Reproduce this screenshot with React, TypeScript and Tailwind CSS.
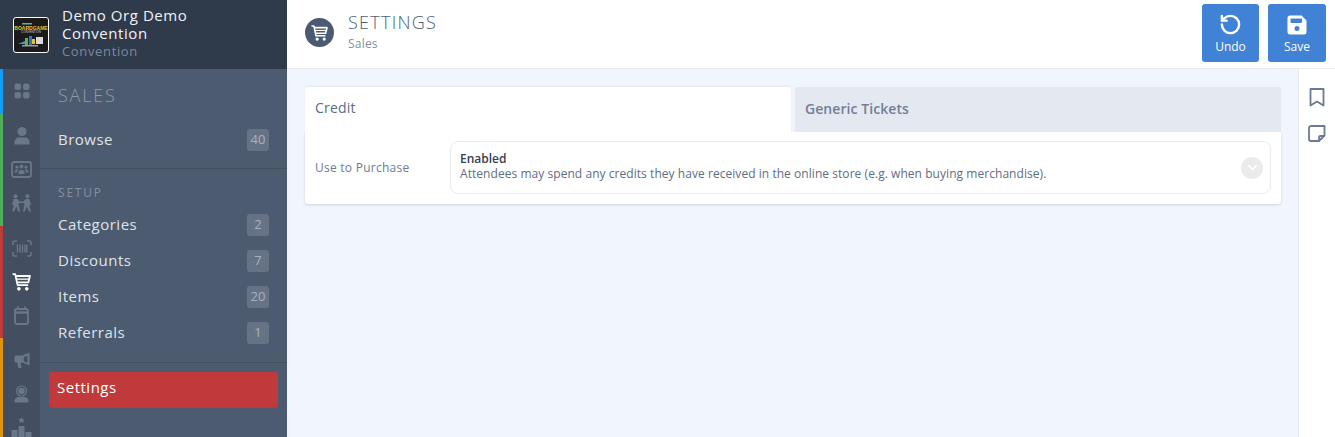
import { ReactNode } from 'react';
import { ChevronDown, RotateCcw } from 'lucide-react';

const font = "font-['Open_Sans',sans-serif]";

function GridIcon() {
  return (
    <svg width="16" height="16" viewBox="0 0 16 16" fill="currentColor">
      <rect x="0.5" y="0.5" width="6.5" height="6.5" rx="2" />
      <rect x="9" y="0.5" width="6.5" height="6.5" rx="2" />
      <rect x="0.5" y="9" width="6.5" height="6.5" rx="2" />
      <rect x="9" y="9" width="6.5" height="6.5" rx="2" />
    </svg>
  );
}

function PersonIcon() {
  return (
    <svg width="16" height="18" viewBox="0 0 16 18" fill="currentColor">
      <circle cx="8" cy="4.5" r="4.5" />
      <path d="M0.5 17.5v-2.5c0-2.5 2.5-4.500 4.500-4.500h6c2 0 4.500 2 4.500 4.500v2.500z" />
    </svg>
  );
}

function AudienceIcon() {
  return (
    <svg width="21" height="17" viewBox="0 0 21 17" fill="none">
      <rect x="1" y="1" width="19" height="15" rx="2" stroke="currentColor" strokeWidth="1.8" />
      <g fill="currentColor">
        <circle cx="6" cy="6" r="1.6" />
        <circle cx="10.5" cy="5.5" r="1.9" />
        <circle cx="15" cy="6" r="1.6" />
        <path d="M3.5 11.5c0-2 1.500-3.300 2.500-3.300.6 0 1 .2 1.300.4-.8.8-1.100 1.900-1.100 2.900z" />
        <path d="M7.2 13c0-2.800 1.600-4.300 3.300-4.300s3.300 1.500 3.300 4.300z" />
        <path d="M17.5 11.500c0-2-1.500-3.300-2.500-3.300-.6 0-1 .2-1.300.4.8.8 1.100 1.900 1.100 2.900z" />
      </g>
    </svg>
  );
}

function CarryIcon() {
  return (
    <svg width="21" height="18" viewBox="0 0 21 18" fill="currentColor">
      <circle cx="4.5" cy="2.2" r="2" />
      <circle cx="16.5" cy="2.2" r="2" />
      <path d="M2.500 5h4l2 2.500h4L14.500 5h4l1.500 6h-1.800l1.800 6.500h-2L15.500 12.500 14 17.500h-2l1.500-7.500-1-1h-4l-1 1L9 17.500H7L5.500 12.500 3 17.500H1l1.800-6.500H1z" />
    </svg>
  );
}

function BarcodeIcon() {
  return (
    <svg width="20" height="17" viewBox="0 0 20 17" fill="none" stroke="currentColor">
      <path d="M1 5V2.500A1.500 1.500 0 0 1 2.500 1H5M15 1h2.500A1.500 1.500 0 0 1 19 2.500V5M19 12v2.500a1.500 1.500 0 0 1-1.500 1.500H15M5 16H2.500A1.500 1.500 0 0 1 1 14.500V12" strokeWidth="1.6" />
      <path d="M5.5 4.500v8M8 4.500v8M10.500 4.500v8M13 4.500v8M14.800 4.500v8" strokeWidth="1.4" />
    </svg>
  );
}

function CartIcon({ width, height }: { width: number; height: number }) {
  return (
    <svg width={width} height={height} viewBox="0 0 18 17" fill="none" stroke="currentColor">
      <path d="M0.500 1H3l2.300 10.500h10" strokeWidth="1.7" strokeLinejoin="round" />
      <path d="M3.500 2.800H17l-1.500 6H4.700" strokeWidth="1.7" strokeLinejoin="round" />
      <path d="M4.200 5.800H16" strokeWidth="1.2" />
      <circle cx="6.500" cy="15" r="1.700" fill="currentColor" stroke="none" />
      <circle cx="14" cy="15" r="1.700" fill="currentColor" stroke="none" />
    </svg>
  );
}

function CalendarIcon() {
  return (
    <svg width="15" height="19" viewBox="0 0 15 19" fill="none" stroke="currentColor">
      <rect x="1" y="3" width="13" height="15" rx="2" strokeWidth="1.9" />
      <path d="M1 6.500h13" strokeWidth="2.400" />
      <path d="M4 0.500v3M11 0.500v3" strokeWidth="1.9" />
    </svg>
  );
}

function MegaphoneIcon() {
  return (
    <svg width="16" height="17" viewBox="0 0 16 17" fill="currentColor">
      <path d="M15.500 0.500v13L8.500 10.500H6.700l.9 5.500H4.300L3.400 10.500H2A1.500 1.500 0 0 1 .5 9V5A1.500 1.500 0 0 1 2 3.500h6.500zM13.500 3.500 9.800 5.200v4l3.700 1.500z" fillRule="evenodd" />
    </svg>
  );
}

function HeadsetIcon() {
  return (
    <svg width="15" height="18" viewBox="0 0 15 18" fill="currentColor">
      <circle cx="7.5" cy="6" r="5" fill="none" stroke="currentColor" strokeWidth="1.2" />
      <circle cx="7.5" cy="6" r="3.2" />
      <path d="M0.500 17.500v-1.500c0-2.500 2-4 4-4h6c2 0 4 1.500 4 4v1.500z" />
    </svg>
  );
}

function PodiumIcon() {
  return (
    <svg width="21" height="20" viewBox="0 0 21 20" fill="currentColor">
      <path d="M10.500 0l1 2.200 2.300.3-1.700 1.500.5 2.300-2.100-1.200-2.100 1.200.5-2.300-1.700-1.500 2.300-.3z" />
      <rect x="7.500" y="9" width="6" height="11" rx="0.5" />
      <rect x="0.500" y="13" width="6" height="7" rx="0.5" />
      <rect x="14.500" y="15" width="6" height="5" rx="0.5" />
    </svg>
  );
}

function SaveIcon() {
  return (
    <svg width="20" height="20" viewBox="0 0 20 20">
      <path
        fill="#ffffff"
        fillRule="evenodd"
        d="M3 0.500h11.500L19.500 5.500V17a2.500 2.500 0 0 1-2.500 2.500H3A2.500 2.500 0 0 1 .5 17V3A2.500 2.500 0 0 1 3 .5zM4.500 3.500a1 1 0 0 0-1 1v2.500a1 1 0 0 0 1 1h9.500a1 1 0 0 0 1-1V4.500a1 1 0 0 0-1-1zM10 11a2.500 2.500 0 1 0 0 5 2.500 2.500 0 0 0 0-5z"
      />
    </svg>
  );
}

function BookmarkIcon() {
  return (
    <svg width="16" height="19" viewBox="0 0 16 19" fill="none" stroke="#6b7a94" strokeWidth="1.8" strokeLinejoin="round">
      <path d="M1.500 1h13v16.500L8 13.500 1.500 17.500z" />
    </svg>
  );
}

function NoteIcon() {
  return (
    <svg width="18" height="17" viewBox="0 0 18 17" fill="none" stroke="#6b7a94" strokeWidth="1.8" strokeLinejoin="round">
      <path d="M16.500 1H3a2 2 0 0 0-2 2v11a2 2 0 0 0 2 2h8l5.500-5.500z" />
      <path d="M11 16v-3.500a1.500 1.500 0 0 1 1.500-1.500h4" />
    </svg>
  );
}

function Logo() {
  return (
    <div className="flex h-9 w-9 items-center justify-center rounded-[3px] border border-white bg-[#1b1b1b]">
      <svg width="34" height="34" viewBox="0 0 34 34">
        <rect x="8" y="5" width="10" height="1.500" fill="#4fb0c8" />
        <text x="17" y="11.500" textAnchor="middle" fontSize="5" fontWeight="700" fill="#e8c62c" fontFamily="Liberation Sans, sans-serif">BOARDGAME</text>
        <text x="17" y="15" textAnchor="middle" fontSize="3" fill="#cfcfcf" fontFamily="Liberation Sans, sans-serif">CONVENTION</text>
        <path d="M4 26l7-3v3z" fill="#3e9bd8" />
        <rect x="11" y="20" width="3" height="7" fill="#59b848" />
        <rect x="15" y="18" width="3" height="9" fill="#3a6fc0" />
        <rect x="18" y="21" width="3" height="5" fill="#e5c32a" />
        <rect x="22" y="19" width="7" height="7" fill="#d8d8d8" />
        <rect x="8" y="27" width="16" height="1.500" fill="#9aa0a0" />
      </svg>
    </div>
  );
}

function RailGroup({ color, children }: { color: string; children: ReactNode }) {
  return (
    <div className={`flex flex-col border-l-[3px] py-[5.6px] ${color}`}>{children}</div>
  );
}

function RailIcon({ active, children }: { active?: boolean; children: ReactNode }) {
  return (
    <div
      className={`flex h-[33.6px] items-center justify-center ${active ? 'text-white' : 'text-[#6a7689]'}`}
    >
      {children}
    </div>
  );
}

function NavRow({ label, count }: { label: string; count: string }) {
  return (
    <div className="flex h-9 items-center justify-between pl-[18px] pr-[18px]">
      <span className="pb-[2px] text-[15px] tracking-[0.5px] text-[#dfe3e9]">{label}</span>
      <span className="flex h-[22px] min-w-[22px] items-center justify-center rounded-[3px] bg-[#667387] text-[13px] text-[#a9b1be]">
        {count}
      </span>
    </div>
  );
}

export default function App() {
  return (
    <div className={`flex h-[437px] w-[1335px] overflow-hidden bg-[#f1f5fe] ${font}`}>
      <aside className="flex w-[287px] shrink-0 flex-col">
        <div className="flex h-[69px] shrink-0 items-center gap-[13px] bg-[#2f3a4b] pl-[13px]">
          <Logo />
          <div className="flex flex-col pb-[3px]">
            <span className="text-[15px] leading-[18px] tracking-[0.55px] text-[#f1f3f6]">
              Demo Org Demo
              <br />
              Convention
            </span>
            <span className="pt-[1px] text-[13px] leading-[17px] tracking-[0.65px] text-[#7c899c]">Convention</span>
          </div>
        </div>
        <div className="flex min-h-0 flex-1">
          <nav className="w-10 shrink-0 bg-[#434f60]">
            <RailGroup color="border-[#0d9dfa]">
              <RailIcon><GridIcon /></RailIcon>
            </RailGroup>
            <RailGroup color="border-[#4fae5c]">
              <RailIcon><PersonIcon /></RailIcon>
              <RailIcon><AudienceIcon /></RailIcon>
              <RailIcon><CarryIcon /></RailIcon>
            </RailGroup>
            <RailGroup color="border-[#c0393b]">
              <RailIcon><BarcodeIcon /></RailIcon>
              <RailIcon active><CartIcon width={19} height={18} /></RailIcon>
              <RailIcon><CalendarIcon /></RailIcon>
            </RailGroup>
            <RailGroup color="border-[#e0930f]">
              <RailIcon><MegaphoneIcon /></RailIcon>
              <RailIcon><HeadsetIcon /></RailIcon>
              <RailIcon><PodiumIcon /></RailIcon>
            </RailGroup>
          </nav>
          <div className="flex-1 bg-[#4d5b70]">
            <h2 className="pl-[18px] pt-[14px] text-lg font-light leading-6 tracking-[1.8px] text-[#8f9cae]">SALES</h2>
            <div className="mt-[15px] border-b border-[#435063] pb-[10px]">
              <NavRow label="Browse" count="40" />
            </div>
            <p className="pl-[18px] pt-[16px] text-xs leading-4 tracking-[1.8px] text-[#8390a3]">SETUP</p>
            <div className="mt-[6px] border-b border-[#435063] pb-[11px]">
              <NavRow label="Categories" count="2" />
              <NavRow label="Discounts" count="7" />
              <NavRow label="Items" count="20" />
              <NavRow label="Referrals" count="1" />
            </div>
            <div className="mx-[9px] mt-[9px] flex h-9 items-center rounded-[3px] bg-[#c0393b] pb-[5px] pl-2 text-[15px] tracking-[0.5px] text-white">
              Settings
            </div>
          </div>
        </div>
      </aside>

      <div className="flex min-w-0 flex-1 flex-col">
        <header className="flex h-[69px] shrink-0 items-start border-b border-[#e8ecf2] bg-white pl-[18px] pr-[9px]">
          <div className="mt-[18px] flex h-[29px] w-[29px] items-center justify-center rounded-full bg-[#4a5a72] text-white">
            <CartIcon width={17} height={16} />
          </div>
          <div className="ml-[14px] mt-[10px] flex flex-col">
            <span className="text-lg font-light leading-6 tracking-[1.25px] text-[#4d5e78]">SETTINGS</span>
            <span className="text-xs leading-5 tracking-[0.2px] text-[#8492a6]">Sales</span>
          </div>
          <div className="ml-auto mt-1 flex gap-[9px]">
            <button className="flex h-[58px] w-[57px] flex-col items-center rounded-[3px] bg-[#3f82d6] pt-[9px] text-xs text-white">
              <RotateCcw size={23} strokeWidth={2.5} />
              <span className="mt-[3px] leading-4">Undo</span>
            </button>
            <button className="flex h-[58px] w-[58px] flex-col items-center rounded-[3px] bg-[#3f82d6] pt-[11px] text-xs text-white">
              <SaveIcon />
              <span className="mt-1 leading-4">Save</span>
            </button>
          </div>
        </header>

        <div className="flex min-h-0 flex-1">
          <main className="min-w-0 flex-1 pl-[18px] pr-[17px] pt-[18px]">
            <div className="flex h-[45px] items-stretch gap-1">
              <div className="flex flex-1 rounded-t-[3px] bg-white pl-[10px] pt-[10px] text-sm leading-[22px] tracking-[0.2px] text-[#5c6c84] shadow-[0_-1px_2px_rgba(0,0,0,0.06)]">
                Credit
              </div>
              <div className="flex flex-1 rounded-t-[3px] bg-[#e4e8f1] pl-[10px] pt-[11px] text-sm font-semibold leading-[22px] tracking-[0.07px] text-[#717f96]">
                Generic Tickets
              </div>
            </div>
            <section className="flex h-[72px] items-start rounded-b-[3px] bg-white pl-[10px] pr-[10px] pt-[9px] shadow-[0_1px_3px_rgba(0,0,0,0.14)]">
              <span className="mt-[19px] w-[135px] shrink-0 text-xs tracking-[0.25px] text-[#6d7c92]">Use to Purchase</span>
              <div className="flex h-[53px] flex-1 items-center justify-between rounded-lg border border-[#e9ecef] pl-[9px] pr-[7px]">
                <div className="flex flex-col pb-[3px]">
                  <span className="text-xs font-semibold leading-[15px] text-[#36404f]">Enabled</span>
                  <span className="text-xs leading-[16px] tracking-[0.05px] text-[#5f6d82]">
                    Attendees may spend any credits they have received in the online store (e.g. when buying merchandise).
                  </span>
                </div>
                <span className="flex h-[22px] w-[22px] items-center justify-center rounded-full bg-[#ebebeb] text-white">
                  <ChevronDown size={15} strokeWidth={3} />
                </span>
              </div>
            </section>
          </main>
          <aside className="flex w-[37px] shrink-0 flex-col items-center gap-[18px] border-l border-[#e8ecf2] bg-white pt-[19px]">
            <BookmarkIcon />
            <NoteIcon />
          </aside>
        </div>
      </div>
    </div>
  );
}
